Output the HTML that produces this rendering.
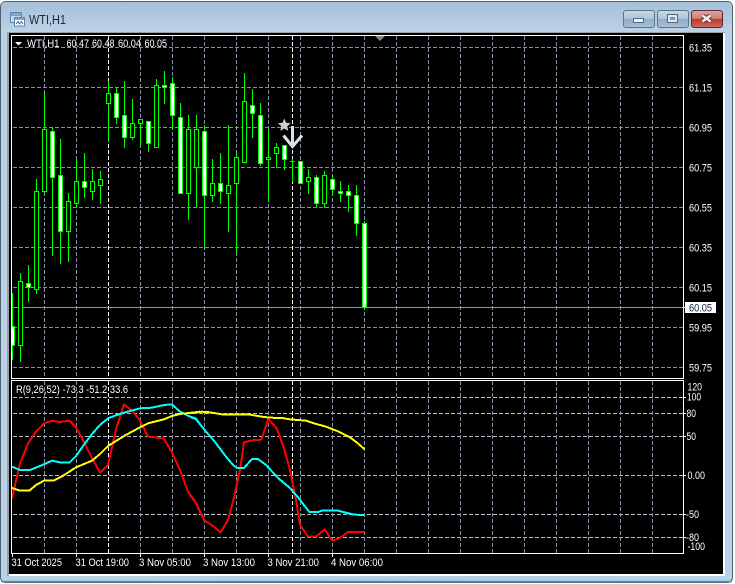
<!DOCTYPE html>
<html><head><meta charset="utf-8"><title>WTI,H1</title>
<style>
html,body{margin:0;padding:0;background:#fff;width:735px;height:584px;overflow:hidden}
svg{display:block}
text{font-family:"Liberation Sans",sans-serif;font-size:11px;fill:#fff}
</style></head><body>
<svg width="735" height="584" viewBox="0 0 735 584" xmlns="http://www.w3.org/2000/svg">
<defs>
<linearGradient id="fr" x1="0" y1="0" x2="1" y2="0"><stop offset="0" stop-color="#bcd2e6"/><stop offset=".5" stop-color="#b4cde4"/><stop offset="1" stop-color="#b9d1ea"/></linearGradient>
<linearGradient id="tb" x1="0" y1="0" x2="0" y2="1"><stop offset="0" stop-color="#a4c0d8"/><stop offset="1" stop-color="#bcd2e6"/></linearGradient>
<linearGradient id="btn" x1="0" y1="0" x2="0" y2="1"><stop offset="0" stop-color="#c6d8e8"/><stop offset=".48" stop-color="#aec6da"/><stop offset=".5" stop-color="#8fadc6"/><stop offset="1" stop-color="#a6c2d8"/></linearGradient>
<linearGradient id="cls" x1="0" y1="0" x2="0" y2="1"><stop offset="0" stop-color="#dda79f"/><stop offset=".48" stop-color="#cf7f72"/><stop offset=".5" stop-color="#b83c2c"/><stop offset="1" stop-color="#cf6a58"/></linearGradient>
</defs>
<!-- window frame -->
<rect x="0.5" y="1.5" width="732" height="581" rx="5" fill="url(#fr)" stroke="#4e6270"/>
<rect x="1" y="2" width="731" height="30" rx="4" fill="url(#tb)"/>
<path d="M1 581.500H732" stroke="#2fa9b8" stroke-width="1.500"/>
<!-- client edge -->
<rect x="7" y="32" width="718" height="544" fill="#fff"/>
<path d="M7 32H725V33H9V576H7Z" fill="#9a9fa5"/>
<rect x="9" y="33" width="714" height="541" fill="#000"/>
<!-- title icon -->
<rect x="10.500" y="12.500" width="11" height="10" fill="#c4dcf2" stroke="#5f86ad"/>
<rect x="11" y="13" width="10" height="3" fill="#7fa6cc"/>
<rect x="14.500" y="17.500" width="10" height="8.500" fill="#fff" stroke="#5f86ad"/>
<rect x="15" y="18" width="9" height="2" fill="#7fa6cc"/>
<path d="M16 24L18 21.500L19.500 24L21.500 21.500L23 24" fill="none" stroke="#3a6ea5"/>
<text x="29" y="24" style="font-size:12.500px;fill:#1e2c38" textLength="37" lengthAdjust="spacingAndGlyphs">WTI,H1</text>
<!-- buttons -->
<rect x="623.500" y="10.500" width="31" height="17" rx="2.500" fill="url(#btn)" stroke="#5d7488"/>
<rect x="657.500" y="10.500" width="31" height="17" rx="2.500" fill="url(#btn)" stroke="#5d7488"/>
<rect x="691.500" y="10.500" width="31" height="17" rx="2.500" fill="url(#cls)" stroke="#5a2c3c"/>
<rect x="633.500" y="18.500" width="10" height="4" fill="#eef2f6" stroke="#54687a"/>
<rect x="667.500" y="14.500" width="10" height="8" fill="#dfe7ee" stroke="#54687a"/>
<rect x="670" y="17" width="5" height="3" fill="#7f98ad"/>
<path d="M702.500 15.500L710.500 21.500M710.500 15.500L702.500 21.500" stroke="#5a2c3c" stroke-width="4.500"/>
<path d="M702.500 15.500L710.500 21.500M710.500 15.500L702.500 21.500" stroke="#f4f0f0" stroke-width="2.600"/>
<!-- grid main -->
<g shape-rendering="crispEdges" fill="none">
<path stroke="#8090a2" stroke-dasharray="4 2" d="M13 47.500H683M13 87.500H683M13 127.500H683M13 167.500H683M13 207.500H683M13 247.500H683M13 287.500H683M13 327.500H683M13 367.500H683"/>
<path stroke="#8090a2" stroke-dasharray="4 2" d="M44.500 36V378M76.500 36V378M140.500 36V378M172.500 36V378M204.500 36V378M236.500 36V378M268.500 36V378M300.500 36V378M332.500 36V378M364.500 36V378M396.500 36V378M428.500 36V378M460.500 36V378M492.500 36V378M524.500 36V378M556.500 36V378M588.500 36V378M620.500 36V378M652.500 36V378"/>
<path stroke="#fff" stroke-dasharray="4 2" d="M108.500 36V378M292.500 36V378"/>
<!-- price line -->
<path stroke="#8d96a0" d="M12 307.500H683"/>
<!-- wicks -->
<path stroke="#00ff00" d="M12.500 293V360M20.500 273V362M28.500 265V302M36.500 179V294M44.500 93V194M52.500 127V256M60.500 139V264M68.500 193V262M76.500 159V207M84.500 153V198M92.500 169V200M100.500 171V204M108.500 81V142M116.500 87V124M124.500 81V148M132.500 99V140M140.500 119V146M148.500 121V152M156.500 79V147M164.500 71V104M172.500 77V130M180.500 103V193M188.500 115V220M196.500 115V207M204.500 125V247M212.500 159V202M220.500 153V204M228.500 125V232M236.500 153V254M244.500 73V162M252.500 89V138M260.500 103V166M268.500 129V202M276.500 143V168M284.500 145V170M292.500 159V182M300.500 161V183M308.500 169V194M316.500 175V208M324.500 171V208M332.500 175V196M340.500 181V202M348.500 185V212M356.500 185V236M364.500 221V310"/>
<path stroke="#00ff00" d="M290 161.500H295"/>
<!-- hollow bodies -->
<g stroke="#00ff00" fill="#000">
<rect x="18.500" y="281.500" width="4" height="64"/>
<rect x="34.500" y="191.500" width="4" height="98"/>
<rect x="42.500" y="129.500" width="4" height="62"/>
<rect x="66.500" y="201.500" width="4" height="30"/>
<rect x="74.500" y="181.500" width="4" height="22"/>
<rect x="90.500" y="181.500" width="4" height="10"/>
<rect x="98.500" y="179.500" width="4" height="6"/>
<rect x="106.500" y="93.500" width="4" height="10"/>
<rect x="130.500" y="123.500" width="4" height="14"/>
<rect x="138.500" y="119.500" width="4" height="4"/>
<rect x="154.500" y="85.500" width="4" height="62"/>
<rect x="186.500" y="129.500" width="4" height="64"/>
<rect x="194.500" y="129.500" width="4" height="38"/>
<rect x="210.500" y="183.500" width="4" height="12"/>
<rect x="226.500" y="185.500" width="4" height="8"/>
<rect x="234.500" y="157.500" width="4" height="26"/>
<rect x="242.500" y="101.500" width="4" height="61"/>
<rect x="266.500" y="157.500" width="4" height="2"/>
<rect x="274.500" y="147.500" width="4" height="6"/>
<rect x="306.500" y="177.500" width="4" height="4"/>
<rect x="322.500" y="175.500" width="4" height="28"/>
</g>
<!-- filled bodies -->
<g stroke="#00ff00" fill="#fff">
<rect x="10.500" y="326.500" width="4" height="19"/>
<rect x="26.500" y="283.500" width="4" height="4"/>
<rect x="50.500" y="131.500" width="4" height="46"/>
<rect x="58.500" y="175.500" width="4" height="56"/>
<rect x="82.500" y="181.500" width="4" height="6"/>
<rect x="114.500" y="93.500" width="4" height="24"/>
<rect x="122.500" y="115.500" width="4" height="22"/>
<rect x="146.500" y="121.500" width="4" height="22"/>
<rect x="162.500" y="85.500" width="4" height="2"/>
<rect x="170.500" y="83.500" width="4" height="32"/>
<rect x="178.500" y="117.500" width="4" height="76"/>
<rect x="202.500" y="131.500" width="4" height="64"/>
<rect x="218.500" y="183.500" width="4" height="8"/>
<rect x="250.500" y="105.500" width="4" height="8"/>
<rect x="258.500" y="115.500" width="4" height="48"/>
<rect x="282.500" y="145.500" width="4" height="14"/>
<rect x="298.500" y="161.500" width="4" height="22"/>
<rect x="314.500" y="177.500" width="4" height="26"/>
<rect x="330.500" y="179.500" width="4" height="10"/>
<rect x="338.500" y="191.500" width="4" height="2"/>
<rect x="346.500" y="191.500" width="4" height="4"/>
<rect x="354.500" y="195.500" width="4" height="28"/>
<rect x="362.500" y="223.500" width="4" height="84"/>
</g>
<!-- sub grid -->
<path stroke="#b4bcc6" stroke-dasharray="4 2" d="M13 397.500H683M13 413.500H683M13 436.500H683M13 475.500H683M13 514.500H683M13 537.500H683"/>
<path stroke="#8090a2" stroke-dasharray="4 2" d="M44.500 381V553M76.500 381V553M140.500 381V553M172.500 381V553M204.500 381V553M236.500 381V553M268.500 381V553M300.500 381V553M332.500 381V553M364.500 381V553M396.500 381V553M428.500 381V553M460.500 381V553M492.500 381V553M524.500 381V553M556.500 381V553M588.500 381V553M620.500 381V553M652.500 381V553"/>
<path stroke="#fff" stroke-dasharray="4 2" d="M108.500 381V553M292.500 381V553"/>
</g>
<!-- arrow + star -->
<path d="M292.500 126V145M283.500 135.500L292.500 146.500L302 135.500" fill="none" stroke="#d8e0e8" stroke-width="3"/>
<path d="M284.300 118.500L286.100 122.800L290.800 123.200L287.300 126.300L288.300 130.900L284.300 128.500L280.300 130.900L281.300 126.300L277.800 123.200L282.500 122.800Z" fill="#c9ccd4"/>
<!-- sub lines -->
<g fill="none" stroke-width="6" shape-rendering="crispEdges" stroke-linejoin="round">
<g transform="translate(0,370) scale(.33333)">
<polyline stroke="#ff0000" points="36,385 60,280 84,220 108,185 132,160 156,152 180,156 208,152 228,172 252,216 276,264 300,308 324,285 348,178 372,103 396,122 420,152 444,200 468,202 492,206 516,248 540,300 564,365 588,398 600,425"/>
<polyline stroke="#00ffff" points="36,290 60,300 90,300 120,288 156,272 180,277 208,278 228,258 252,224 276,192 300,165 324,145 348,136 372,128 420,115 456,113 492,105 516,103 540,125 564,137 588,146 600,162"/>
<polyline stroke="#ffff00" points="36,354 60,362 88,362 108,345 132,332 160,332 188,318 228,292 276,272 300,252 324,228 372,198 420,172 444,160 492,148 516,138 540,132 600,125"/>
</g>
<g transform="translate(190,380) scale(.33333)">
<polyline stroke="#ff0000" points="0,345 18,370 42,420 66,436 92,457 114,420 132,352 150,270 162,187 186,181 214,179 235,117 260,145 282,205 300,270 318,360 330,435 354,470 378,470 404,448 426,482 450,474 474,456 524,456"/>
<polyline stroke="#00ffff" points="0,110 18,118 48,155 72,182 108,230 132,258 144,264 162,264 186,237 204,237 228,255 264,294 300,324 324,352 358,396 384,396 396,392 444,392 468,398 492,404 524,405"/>
<polyline stroke="#ffff00" points="0,100 36,95 60,97 96,103 132,104 180,104 216,110 240,113 276,114 300,118 348,122 372,130 408,140 444,154 480,172 500,187 524,208"/>
</g>
</g>
<!-- frames -->
<g shape-rendering="crispEdges">
<rect x="9" y="33" width="2" height="525" fill="#000"/>
<path fill="none" stroke="#fff" d="M11.500 35.500H683.500V378.500H11.500Z"/>
<path fill="none" stroke="#fff" d="M11.500 380.500H683.500V553.500H11.500Z"/>
<path stroke="#fff" d="M12.500 554V557M76.500 554V557M140.500 554V557M204.500 554V557M268.500 554V557M332.500 554V557"/>
<path stroke="#fff" d="M684 397.500H686M684 413.500H686M684 436.500H686M684 475.500H686M684 514.500H686M684 537.500H686M684 307.500H686"/>
</g>
<polygon points="375,36 385,36 380,41" fill="#7f8790"/>
<polygon points="15,42 22,42 18.500,45.500" fill="#fff"/>
<!-- info -->
<text x="27" y="47" textLength="32.500" lengthAdjust="spacingAndGlyphs">WTI,H1</text>
<text x="66.500" y="47" textLength="22.500" lengthAdjust="spacingAndGlyphs">60.47</text>
<text x="92" y="47" textLength="22.500" lengthAdjust="spacingAndGlyphs">60.48</text>
<text x="118" y="47" textLength="23" lengthAdjust="spacingAndGlyphs">60.04</text>
<text x="144.500" y="47" textLength="22.500" lengthAdjust="spacingAndGlyphs">60.05</text>
<text x="16" y="393" textLength="112" lengthAdjust="spacingAndGlyphs">R(9,26,52) -73.3 -51.2 33.6</text>
<!-- price axis -->
<text x="689" y="51.500" textLength="23" lengthAdjust="spacingAndGlyphs">61.35</text>
<text x="689" y="91.500" textLength="23" lengthAdjust="spacingAndGlyphs">61.15</text>
<text x="689" y="131.500" textLength="23" lengthAdjust="spacingAndGlyphs">60.95</text>
<text x="689" y="171.500" textLength="23" lengthAdjust="spacingAndGlyphs">60.75</text>
<text x="689" y="211.500" textLength="23" lengthAdjust="spacingAndGlyphs">60.55</text>
<text x="689" y="251.500" textLength="23" lengthAdjust="spacingAndGlyphs">60.35</text>
<text x="689" y="291.500" textLength="23" lengthAdjust="spacingAndGlyphs">60.15</text>
<text x="689" y="331.500" textLength="23" lengthAdjust="spacingAndGlyphs">59.95</text>
<text x="689" y="371.500" textLength="23" lengthAdjust="spacingAndGlyphs">59.75</text>
<rect x="685" y="302" width="31" height="11" fill="#fff"/>
<text x="689" y="311.500" style="fill:#10203a" textLength="23" lengthAdjust="spacingAndGlyphs">60.05</text>
<!-- indicator axis -->
<text x="687.500" y="390.500" textLength="14.500" lengthAdjust="spacingAndGlyphs">120</text>
<text x="687" y="400.500" textLength="14" lengthAdjust="spacingAndGlyphs">100</text>
<text x="686.500" y="417" textLength="9.500" lengthAdjust="spacingAndGlyphs">80</text>
<text x="686.500" y="440" textLength="9.500" lengthAdjust="spacingAndGlyphs">50</text>
<text x="687.500" y="479" textLength="17.500" lengthAdjust="spacingAndGlyphs">0.00</text>
<text x="686" y="518" textLength="13" lengthAdjust="spacingAndGlyphs">-50</text>
<text x="686" y="541" textLength="13" lengthAdjust="spacingAndGlyphs">-80</text>
<text x="687.500" y="550" textLength="17.500" lengthAdjust="spacingAndGlyphs">-100</text>
<!-- time axis -->
<text x="11.500" y="566" textLength="50.500" lengthAdjust="spacingAndGlyphs">31 Oct 2025</text>
<text x="75.500" y="566" textLength="53.500" lengthAdjust="spacingAndGlyphs">31 Oct 19:00</text>
<text x="139" y="566" textLength="52" lengthAdjust="spacingAndGlyphs">3 Nov 05:00</text>
<text x="203" y="566" textLength="52" lengthAdjust="spacingAndGlyphs">3 Nov 13:00</text>
<text x="267.500" y="566" textLength="51.500" lengthAdjust="spacingAndGlyphs">3 Nov 21:00</text>
<text x="331" y="566" textLength="52" lengthAdjust="spacingAndGlyphs">4 Nov 06:00</text>
</svg>
</body></html>
